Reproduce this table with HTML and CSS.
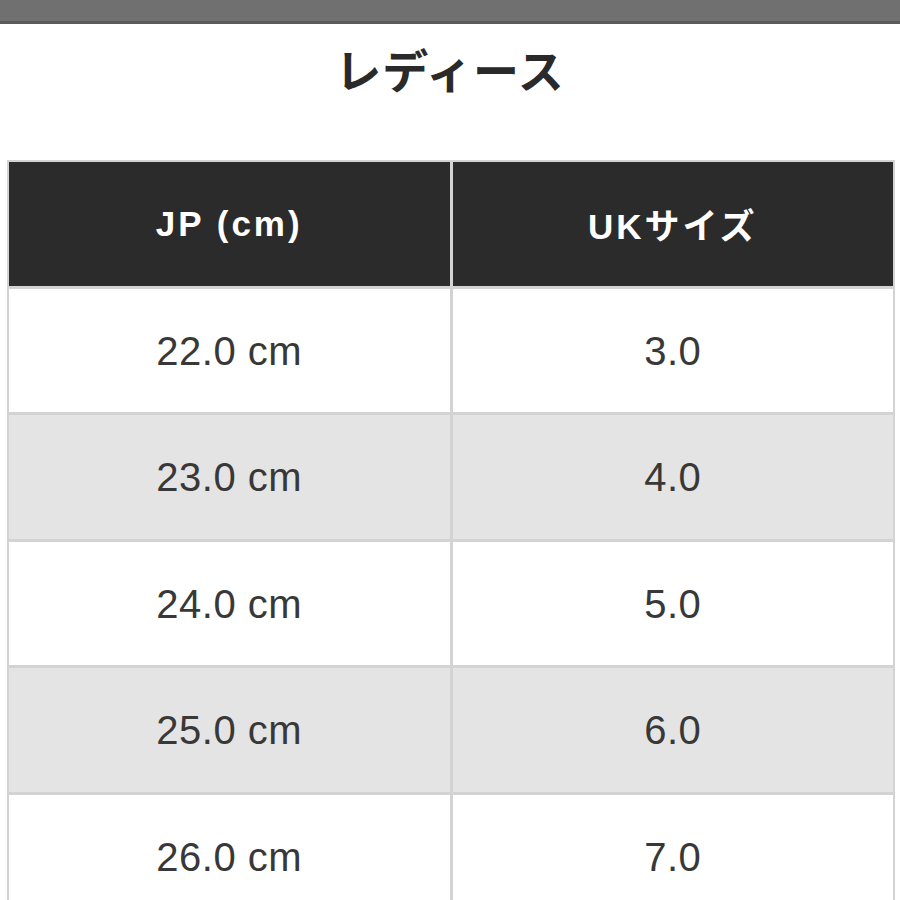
FILE: index.html
```html
<!DOCTYPE html>
<html lang="ja">
<head>
<meta charset="utf-8">
<title>レディース</title>
<link rel="stylesheet" href="styles.css">
</head>
<body>
<div class="topbar"></div>
<h1 class="title">レディース</h1>
<div class="size-table">
  <div class="cell head">JP (cm)</div>
  <div class="cell head">UKサイズ</div>
  <div class="cell">22.0 cm</div>
  <div class="cell">3.0</div>
  <div class="cell alt">23.0 cm</div>
  <div class="cell alt">4.0</div>
  <div class="cell">24.0 cm</div>
  <div class="cell">5.0</div>
  <div class="cell alt">25.0 cm</div>
  <div class="cell alt">6.0</div>
  <div class="cell">26.0 cm</div>
  <div class="cell">7.0</div>
</div>
</body>
</html>
```
FILE: styles.css
```css
html, body {
  margin: 0;
  padding: 0;
  background: #ffffff;
  font-family: "Liberation Sans", "Noto Sans CJK JP", sans-serif;
  color: #333333;
}
.topbar {
  height: 21px;
  background: #707070;
  border-bottom: 3px solid #5a5a5a;
}
.title {
  margin: 14px 0 0;
  height: 60px;
  line-height: 60px;
  text-align: center;
  font-family: "Noto Sans CJK JP", sans-serif;
  font-size: 46px;
  font-weight: 700;
  letter-spacing: 1px;
  color: #2a2a2a;
}
.size-table {
  margin: 62px 0 0 7px;
  width: 884px;
  padding: 2px;
  background: #d3d3d3;
  display: grid;
  grid-template-columns: 1fr 1fr;
  grid-auto-rows: 123.5px;
  column-gap: 3px;
  row-gap: 3px;
}
.cell {
  background: #ffffff;
  display: flex;
  align-items: center;
  justify-content: center;
  font-size: 40px;
  letter-spacing: 0.5px;
  color: #383838;
  padding-top: 2px;
}
.cell.alt {
  background: #e4e4e4;
}
.cell.head {
  background: #2b2b2b;
  color: #ffffff;
  font-weight: 700;
  font-size: 35px;
  letter-spacing: 3px;
  padding-top: 0;
}
```
